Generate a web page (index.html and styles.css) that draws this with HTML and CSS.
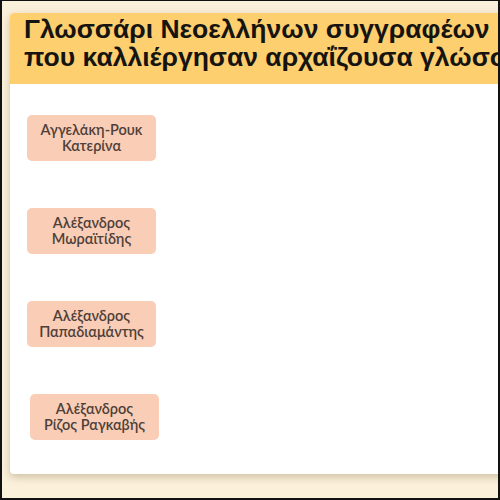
FILE: index.html
```html
<!DOCTYPE html>
<html lang="el">
<head>
<meta charset="utf-8">
<link rel="stylesheet" href="styles.css">
</head>
<body>
<div class="frame">
  <div class="card">
    <h1 class="title">Γλωσσάρι Νεοελλήνων συγγραφέων<br>που καλλιέργησαν αρχαΐζουσα γλώσσα</h1>
    <div class="list">
      <div class="chip">Αγγελάκη-Ρουκ<br>Κατερίνα</div>
      <div class="chip">Αλέξανδρος<br>Μωραϊτίδης</div>
      <div class="chip">Αλέξανδρος<br>Παπαδιαμάντης</div>
      <div class="chip shift">Αλέξανδρος<br>Ρίζος Ραγκαβής</div>
    </div>
  </div>
</div>
</body>
</html>
```

FILE: styles.css
```css
html, body {
  margin: 0;
  padding: 0;
  overflow: hidden;
}
.frame {
  width: 500px;
  height: 500px;
  box-sizing: border-box;
  border: 2px solid #111;
  border-top-width: 1px;
  background: #fbf0da;
  overflow: hidden;
  padding: 12px 0 0 8px;
}
.card {
  width: 620px;
  height: 461px;
  background: #fff;
  border-radius: 4px;
  box-shadow: 0 3px 8px rgba(120, 100, 60, 0.35);
  overflow: hidden;
}
.title {
  margin: 0;
  background: #fdcf6f;
  font-family: "Liberation Sans", Arial, sans-serif;
  font-weight: bold;
  font-size: 26.5px;
  line-height: 28px;
  color: #161410;
  padding: 2px 0 13px 14px;
  white-space: nowrap;
}
.list {
  display: flex;
  flex-direction: column;
  align-items: flex-start;
  gap: 47px;
  padding: 31px 0 0 17px;
}
.chip {
  width: 129px;
  height: 46px;
  box-sizing: border-box;
  display: flex;
  align-items: center;
  justify-content: center;
  text-align: center;
  background: #f9cdb6;
  border-radius: 5px;
  font-family: Lato, sans-serif;
  font-weight: 600;
  font-size: 14.5px;
  line-height: 16px;
  color: #4e3f39;
}
.shift {
  margin-left: 3px;
}
```
